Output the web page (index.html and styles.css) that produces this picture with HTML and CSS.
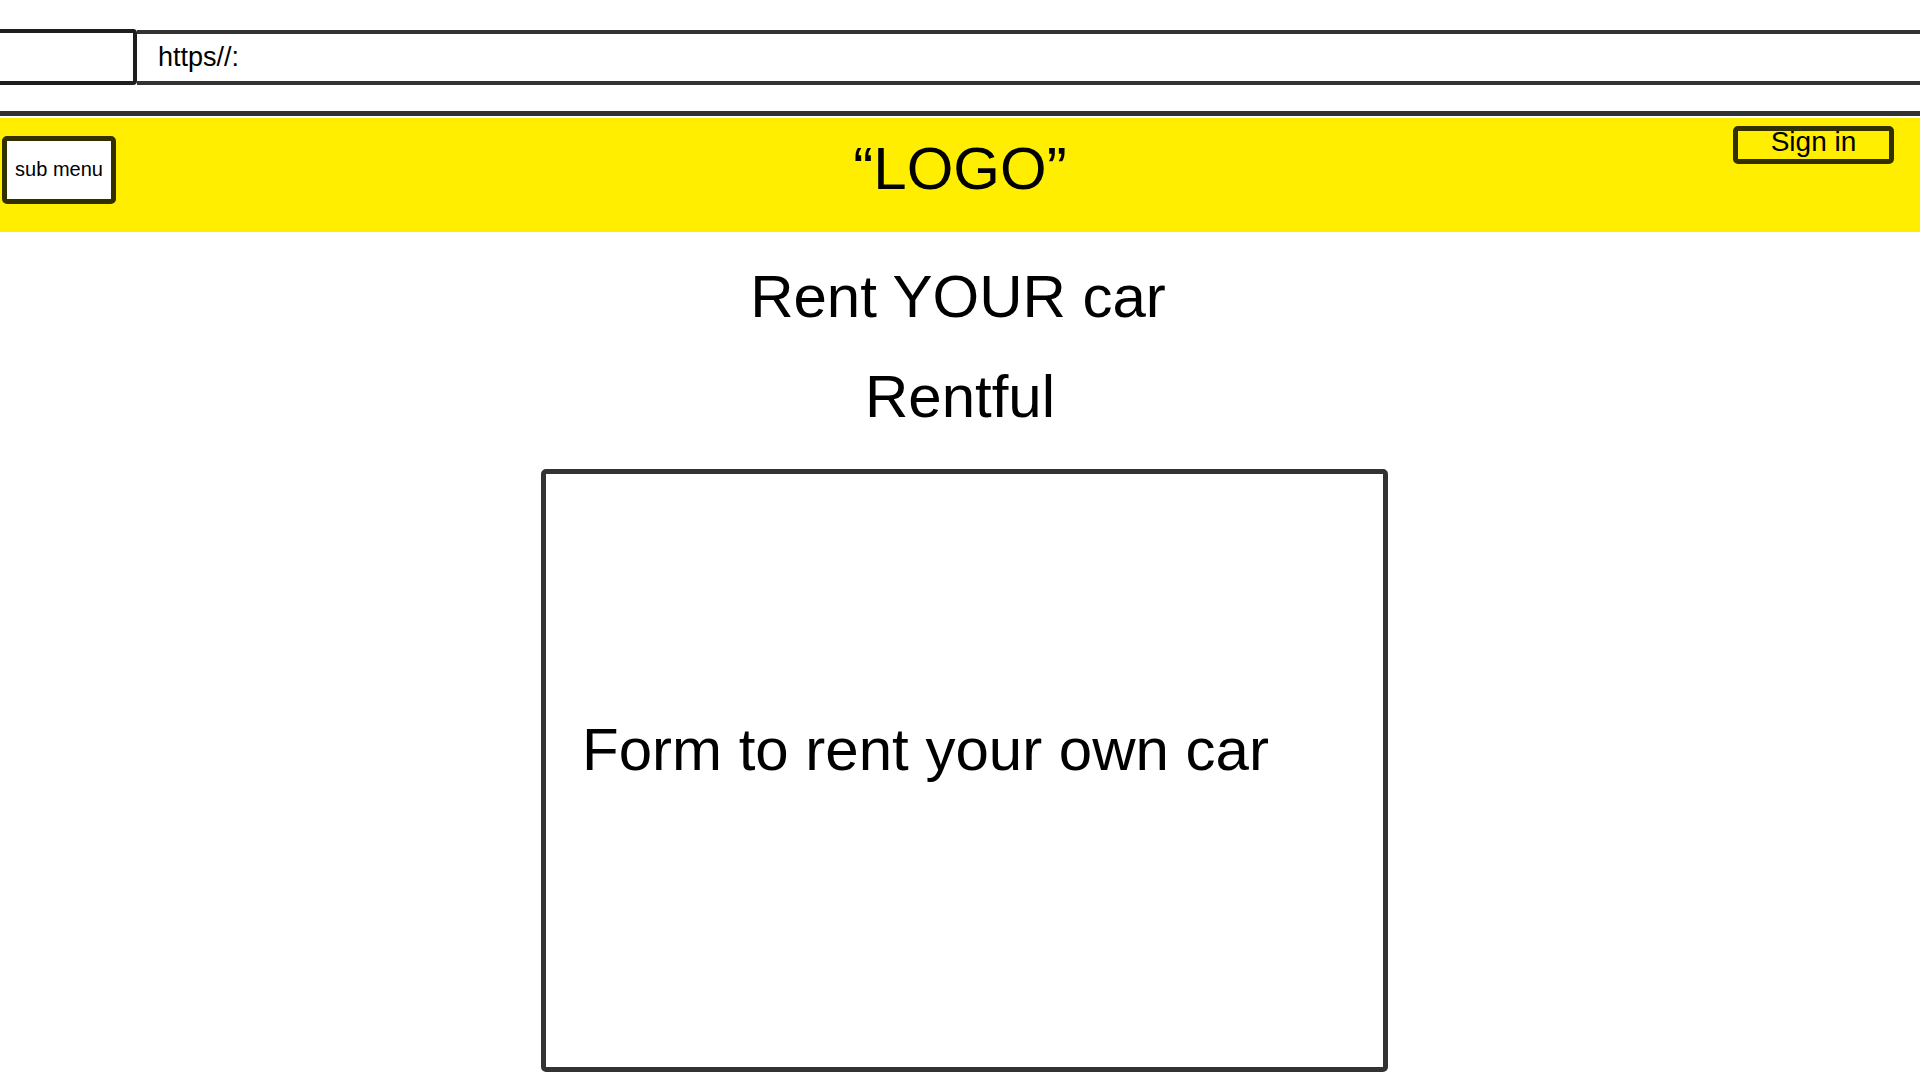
FILE: index.html
```html
<!DOCTYPE html>
<html lang="en">
<head>
<meta charset="utf-8">
<title>Rentful</title>
<link rel="stylesheet" href="styles.css">
</head>
<body>
  <div class="browser">
    <div class="browser-row">
      <div class="tab-box"></div>
      <div class="url-bar">https//:</div>
    </div>
    <div class="browser-rule"></div>
  </div>
  <header class="site-header">
    <div class="header-left">
      <button class="sub-menu">sub menu</button>
    </div>
    <div class="logo">“LOGO”</div>
    <div class="header-right">
      <button class="sign-in">Sign in</button>
    </div>
  </header>
  <main class="content">
    <h1 class="title title-main">Rent YOUR car</h1>
    <h2 class="title">Rentful</h2>
    <section class="form-box">
      <p class="form-text">Form to rent your own car</p>
    </section>
  </main>
</body>
</html>
```
FILE: styles.css
```css
html, body {
  margin: 0;
  padding: 0;
  background: #ffffff;
}
body {
  font-family: "Liberation Sans", Arial, sans-serif;
  color: #000;
  overflow: hidden;
  width: 1920px;
}
.browser {
  padding-top: 29px;
}
.browser-row {
  display: flex;
  align-items: flex-start;
}
.tab-box {
  box-sizing: border-box;
  width: 142px;
  height: 56px;
  margin-left: -5px;
  border: 4px solid #1e1e1e;
  border-radius: 4px;
}
.url-bar {
  box-sizing: border-box;
  flex: 1;
  height: 55px;
  margin-top: 1px;
  border-top: 4px solid #333;
  border-bottom: 4px solid #333;
  padding-left: 21px;
  font-size: 27px;
  line-height: 47px;
}
.browser-rule {
  height: 5px;
  background: #333;
  margin-top: 26px;
  margin-bottom: 2px;
}
.site-header {
  display: grid;
  grid-template-columns: 1fr auto 1fr;
  height: 114px;
  background: #ffee00;
}
.header-left {
  padding-top: 18px;
  padding-left: 2px;
}
.sub-menu {
  box-sizing: border-box;
  width: 114px;
  height: 68px;
  border: 5px solid #333000;
  border-radius: 5px;
  background: #fff;
  font-family: "Liberation Sans", Arial, sans-serif;
  font-size: 20px;
  color: #000;
  padding: 0 0 2px;
  display: flex;
  align-items: center;
  justify-content: center;
}
.logo {
  font-size: 60px;
  line-height: 60px;
  padding-top: 21px;
}
.header-right {
  display: flex;
  justify-content: flex-end;
  align-items: flex-start;
  padding-top: 8px;
  padding-right: 26px;
}
.sign-in {
  box-sizing: border-box;
  width: 161px;
  height: 38px;
  border: 5px solid #333000;
  border-radius: 5px;
  background: transparent;
  font-family: "Liberation Sans", Arial, sans-serif;
  font-size: 28px;
  line-height: 22px;
  color: #000;
  padding: 0;
  display: flex;
  justify-content: center;
  align-items: flex-start;
}
.content {
  padding-top: 15px;
}
.title {
  margin: 0;
  font-size: 60px;
  font-weight: normal;
  line-height: 100px;
  text-align: center;
}
.title-main {
  padding-right: 4px;
}
.form-box {
  box-sizing: border-box;
  width: 847px;
  height: 603px;
  margin-top: 22px;
  margin-left: 541px;
  border: 5px solid #333;
  border-radius: 5px;
  padding: 241px 0 0 36px;
}
.form-text {
  margin: 0;
  font-size: 60px;
  line-height: normal;
}
```
